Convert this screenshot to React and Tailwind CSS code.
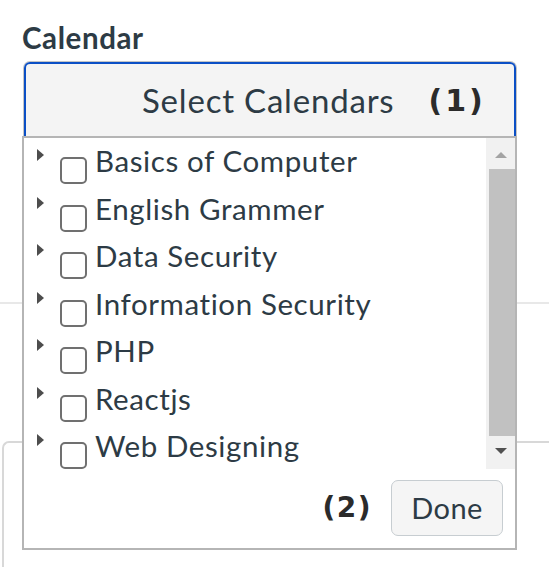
import React from "react";

const items = [
  "Basics of Computer",
  "English Grammer",
  "Data Security",
  "Information Security",
  "PHP",
  "Reactjs",
  "Web Designing",
];

function Row({ label }) {
  return (
    <div className="flex items-start h-[47.5px] shrink-0">
      <div className="ml-[13px] mt-[5px] w-0 h-0 border-y-[6px] border-y-transparent border-l-[7px] border-l-[#4d4d4d]" />
      <div className="ml-[16px] mt-[13px] w-[27px] h-[27px] rounded-[5px] border-2 border-[#707070] bg-white shrink-0" />
      <span className="ml-[8px] mt-[-1px] text-[29.5px] tracking-[0.6px] leading-[36px] text-[#2d3b45] whitespace-nowrap">{label}</span>
    </div>
  );
}

export default function App() {
  return (
    <div className="relative w-[549px] h-[567px] overflow-hidden bg-white" style={{ fontFamily: "Lato, 'Open Sans', sans-serif" }}>
      <div className="pt-[20px] pl-[22px] text-[29.5px] tracking-[0.6px] leading-[35px] font-bold text-[#2d3b45]">Calendar</div>
      <div className="ml-[23px] mt-[6px] w-[494px] h-[80px] rounded-t-[7px] border border-[#c4c4c4] border-b-0">
        <div className="h-full rounded-t-[6px] border-2 border-b-0 border-[#0b4fc5] bg-[#f4f4f4] flex items-start">
          <span className="ml-[116px] mt-[16px] text-[33px] tracking-[0.8px] leading-[40px] text-[#2d3b45]">Select Calendars</span>
          <span className="ml-[34px] mt-[18px] text-[30px] tracking-[3px] leading-[38px] font-bold text-[#2b2b2b]" style={{ fontFamily: "'DejaVu Sans', sans-serif" }}>(1)</span>
        </div>
      </div>
      <div className="mt-[161px] h-[2px] bg-[#e8e8e8]" />
      <div className="mt-[137px] ml-[2px] h-[200px] rounded-tl-[7px] border-t-2 border-l-2 border-[#d8d8d8]" />

      <div className="absolute left-[22px] top-[136px] w-[495px] h-[414px] border-2 border-[#b5b5b5] bg-white flex flex-col">
        <div className="flex h-[331px] shrink-0">
          <div className="flex-1 flex flex-col pt-[6px] overflow-hidden">
            {items.map((it) => (
              <Row key={it} label={it} />
            ))}
          </div>
          <div className="w-[29px] bg-[#f1f1f1] flex flex-col items-center">
            <div className="mt-[14px] w-0 h-0 border-x-[6px] border-x-transparent border-b-[6px] border-b-[#a3a3a3]" />
            <div className="mt-[11px] w-[26px] ml-[2px] h-[267px] bg-[#c1c1c1]" />
            <div className="mt-[12px] w-0 h-0 border-x-[6px] border-x-transparent border-t-[6px] border-t-[#505050]" />
          </div>
        </div>
        <div className="flex items-start justify-end pr-[12px] pt-[11px]">
          <span className="mt-[12px] text-[28px] tracking-[1.5px] leading-[32px] font-bold text-[#2b2b2b]" style={{ fontFamily: "'DejaVu Sans', sans-serif" }}>(2)</span>
          <button className="ml-[19px] w-[112px] h-[56px] rounded-[7px] border border-[#c7cdd1] bg-[#f5f5f5] text-[29px] tracking-[0.4px] text-[#2d3b45] flex items-center justify-center">Done</button>
        </div>
      </div>
    </div>
  );
}
